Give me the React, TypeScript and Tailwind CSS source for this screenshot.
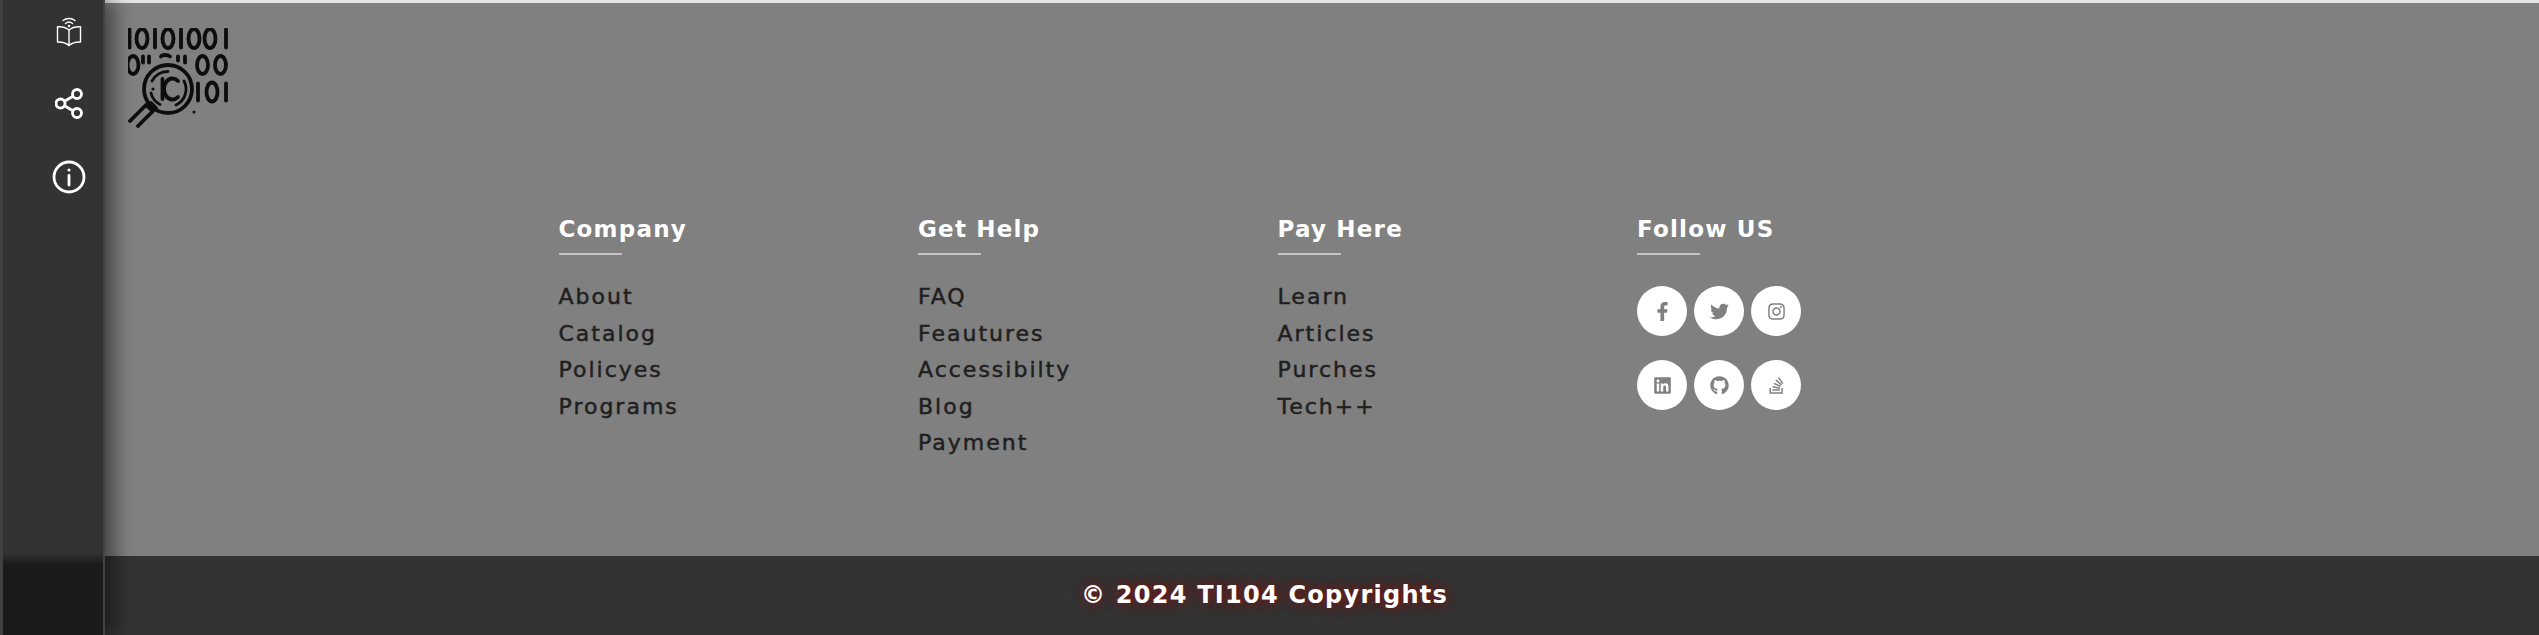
import { FaFacebookF, FaTwitter, FaInstagram, FaLinkedin, FaGithub, FaStackOverflow } from 'react-icons/fa';

const columns = [
  { title: 'Company', links: ['About', 'Catalog', 'Policyes', 'Programs'] },
  { title: 'Get Help', links: ['FAQ', 'Feautures', 'Accessibilty', 'Blog', 'Payment'] },
  { title: 'Pay Here', links: ['Learn', 'Articles', 'Purches', 'Tech++'] },
];

const socials = [
  [FaFacebookF, FaTwitter, FaInstagram],
  [FaLinkedin, FaGithub, FaStackOverflow],
];

function BookIcon() {
  return (
    <svg width="26" height="30" viewBox="0 0 26 30" fill="none" stroke="white" strokeWidth="1.4" strokeLinejoin="round" strokeLinecap="round">
      <path d="M13 13 C10 10.500 6 9.500 1.500 9.800 V25 C6 24.800 10 25.800 13 28.500 C16 25.800 20 24.800 24.500 25 V9.800 C20 9.500 16 10.500 13 13 Z" />
      <path d="M13 13 V28.500" />
      <path d="M9.500 6.500 C11.500 4.800 14.500 4.800 16.500 6.500" />
      <path d="M7 3.500 C10.500 0.800 15.500 0.800 19 3.500" />
      <circle cx="13" cy="9" r="0.500" />
    </svg>
  );
}

function ShareIcon() {
  return (
    <svg width="28" height="31" viewBox="0 0 28 31" fill="none" stroke="white" strokeWidth="2.800">
      <circle cx="22" cy="6" r="4.500" />
      <circle cx="22" cy="25" r="4.500" />
      <circle cx="5.500" cy="15.500" r="4.500" />
      <path d="M9.500 13.200 L18 8.300 M9.500 17.800 L18 22.700" />
    </svg>
  );
}

function InfoIcon() {
  return (
    <svg width="34" height="34" viewBox="0 0 34 34" fill="none" stroke="white" strokeWidth="2.800" strokeLinecap="round">
      <circle cx="17" cy="17" r="15" />
      <path d="M17 15.500 V25" />
      <circle cx="17" cy="10" r="0.800" fill="white" strokeWidth="1.500" />
    </svg>
  );
}

// logo: binary digits with a magnifier on top
function Logo() {
  const bars = [
    [1.5, 0, 21], [27, 0, 21], [53, 0, 21], [98, 0, 21],
    [15, 27, 36], [21, 27, 36], [50, 27, 34], [57, 27, 36],
    [70, 54, 74], [98, 54, 74],
  ];
  const zeros = [
    [14, 10.500, 10.500], [40, 10.500, 10.500], [66, 10.500, 10.500], [82, 10.500, 10.500],
    [5, 37, 10], [74.500, 37, 10], [92.500, 37, 10],
    [84, 64, 10.500],
  ];
  return (
    <svg width="100" height="100" viewBox="0 0 100 100" fill="none" stroke="#0d0d0d" strokeWidth="3.800" strokeLinecap="round" className="block">
      {bars.map(([x, y1, y2]) => (
        <line key={`${x}-${y1}`} x1={x} y1={y1 + 1.500} x2={x} y2={y2 - 1.500} />
      ))}
      {zeros.map(([cx, cy, ry]) => (
        <ellipse key={`${cx}-${cy}`} cx={cx} cy={cy} rx={5.500} ry={ry - 1} />
      ))}
      <path d="M33 28.500 C34 26.500 40 26.500 42 28.500" />
      <circle cx="40" cy="61" r="26" fill="#808080" stroke="none" />
      <circle cx="40" cy="61" r="24" />
      <path d="M24 53 A17.500 17.500 0 0 1 40 43.500 M56 53 A17.500 17.500 0 0 1 48 77 M32 76.500 A17.500 17.500 0 0 1 23 65" strokeWidth="2.800" />
      <line x1="34.500" y1="51" x2="34.500" y2="71" />
      <path d="M50 53 A8.500 10.500 0 1 0 50 69" />
      <circle cx="25" cy="61" r="0.800" fill="#0d0d0d" strokeWidth="1.500" />
      <circle cx="66" cy="84" r="0.800" fill="#0d0d0d" strokeWidth="1.500" />
      <path d="M18 77 L2 93 M25 83 L10 98 M18 77 L25 83 M23 75 L28 80" />
    </svg>
  );
}

export default function App() {
  return (
    <div className="relative h-[635px] w-[2539px] overflow-hidden bg-[#808080] font-['DejaVu_Sans',sans-serif]">
      <div className="h-[3px] bg-[#e6e6e6]" />

      <div className="pl-[128px] pt-[25px]">
        <Logo />
      </div>

      <div className="mx-auto mt-[86px] grid w-[1440px] grid-cols-[359.500px_359.500px_359.500px_359.500px] pl-[9px]">
        {columns.map((col) => (
          <div key={col.title}>
            <h4 className="text-[23px] leading-[30px] font-bold tracking-[1.2px] text-white">{col.title}</h4>
            <div className="mt-[9px] h-[2px] w-[63px] bg-[#c4c4c4]" />
            <ul className="mt-[24px]">
              {col.links.map((link) => (
                <li key={link} className="h-[36.500px] text-[22px] leading-[36.500px] tracking-[2px] text-[#1f1f1f] [-webkit-text-stroke:0.5px_#1f1f1f]">
                  {link}
                </li>
              ))}
            </ul>
          </div>
        ))}
        <div>
          <h4 className="text-[23px] leading-[30px] font-bold tracking-[1.2px] text-white">Follow US</h4>
          <div className="mt-[9px] h-[2px] w-[63px] bg-[#c4c4c4]" />
          <div className="mt-[31px] flex flex-col gap-[24px]">
            {socials.map((row, i) => (
              <div key={i} className="flex gap-[7px]">
                {row.map((Icon, j) => (
                  <a key={j} className="flex h-[50px] w-[50px] items-center justify-center rounded-full bg-white text-[#808080]">
                    <Icon size={19} />
                  </a>
                ))}
              </div>
            ))}
          </div>
        </div>
      </div>

      <footer className="absolute inset-x-0 bottom-0 flex h-[79px] items-center justify-center bg-[#333333] pr-[10px] pb-[2px]">
        <p className="text-[24px] font-bold tracking-[1.25px] text-white [text-shadow:0_0_12px_#6e1919,0_0_12px_#6e1919]">© 2024 TI104 Copyrights</p>
      </footer>

      {/* sidebar sits over the page */}
      <aside className="absolute inset-y-0 left-0 flex w-[105px] flex-col items-center gap-[41px] border-r-2 border-l-[3px] border-r-[#444444] border-l-[#404040] bg-[linear-gradient(to_bottom,#333333_87%,#1a1a1a_89%)] pt-[17px] pl-[32px] shadow-[10px_0_18px_rgba(0,0,0,0.45)]">
        <BookIcon />
        <ShareIcon />
        <InfoIcon />
      </aside>
    </div>
  );
}
